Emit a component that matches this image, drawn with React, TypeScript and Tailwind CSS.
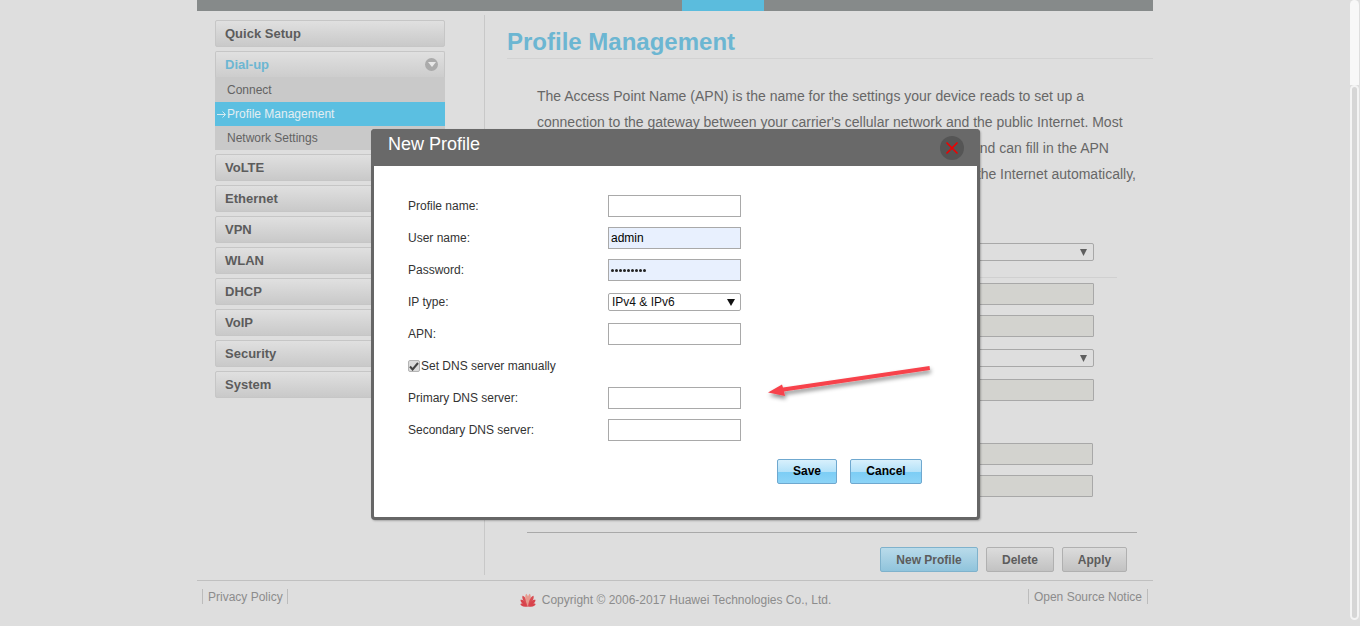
import React from "react";

const closedTop = ["Quick Setup"];
const closedBottom = ["VoLTE", "Ethernet", "VPN", "WLAN", "DHCP", "VoIP", "Security", "System"];

function NavItem({ label }: { label: string }) {
  return (
    <div className="h-[27px] flex items-center pl-[9px] text-[13px] font-bold text-[#5c5c5c] border border-[#c6c6c6] rounded-[2px] bg-gradient-to-b from-[#e0e0e0] to-[#c9c9c9]">
      {label}
    </div>
  );
}

function DimInput({ className = "" }: { className?: string }) {
  return <div className={"h-[22px] w-[300px] border border-[#a8a8a8] bg-[#d3d3cf] rounded-[1px] " + className} />;
}

function DimSelect({ className = "" }: { className?: string }) {
  return (
    <div className={"h-[18px] w-[300px] border border-[#a8a8a8] bg-[#dedede] rounded-[2px] flex items-center justify-end pr-[6px] " + className}>
      <svg width="7" height="7" viewBox="0 0 7 7"><path d="M0 0h7L3.500 7z" fill="#5f5f5f" /></svg>
    </div>
  );
}

function FieldRow({ label, children }: { label: string; children: React.ReactNode }) {
  return (
    <div className="h-8 flex items-center">
      <div className="w-[200px] text-[12px] text-[#333]">{label}</div>
      {children}
    </div>
  );
}

function TextBox({ value, filled }: { value?: string; filled?: boolean }) {
  return (
    <div className={"h-[22px] w-[133px] border border-[#a9a9a9] flex items-center pl-[2px] text-[12px] text-black " + (filled ? "bg-[#e8f0fe]" : "bg-white")}>
      {value}
    </div>
  );
}

function HuaweiLogo() {
  const petals = [
    { a: -72, l: 8, c: "#d8434c" },
    { a: -48, l: 10, c: "#d8434c" },
    { a: -27, l: 12, c: "#d94c52" },
    { a: -8, l: 13, c: "#e79a8f" },
    { a: 8, l: 13, c: "#e79a8f" },
    { a: 27, l: 12, c: "#d94c52" },
    { a: 48, l: 10, c: "#d8434c" },
    { a: 72, l: 8, c: "#d8434c" },
  ];
  return (
    <svg width="18" height="15" viewBox="0 0 18 15">
      {petals.map((p, i) => (
        <path
          key={i}
          d={`M9 14.500C6.400 ${14.5 - p.l * 0.6} 7.600 ${14.5 - p.l * 0.9} 9 ${14.5 - p.l}C10.400 ${14.5 - p.l * 0.9} 11.600 ${14.5 - p.l * 0.6} 9 14.500Z`}
          fill={p.c}
          transform={`rotate(${p.a} 9 14.500)`}
        />
      ))}
    </svg>
  );
}

export default function App() {
  return (
    <div className="relative h-[626px] overflow-hidden flex bg-[#dedede] font-['Liberation_Sans',Arial,sans-serif]">
      <div className="flex-1 min-w-0">
        <div className="mx-auto w-[956px]">
          {/* top bar */}
          <div className="h-[11px] flex">
            <div className="w-[485px] bg-[#868a8a]" />
            <div className="w-[82px] bg-[#5bbcdd]" />
            <div className="flex-1 bg-[#868a8a]" />
          </div>

          {/* body */}
          <div className="mt-[4px] h-[560px] flex">
            <aside className="w-[288px] shrink-0 border-r border-[#c8c8c8] pl-[18px] pr-[39px] pt-[5px]">
              <div className="flex flex-col gap-[4px]">
                {closedTop.map((l) => <NavItem key={l} label={l} />)}
                <div>
                  <div className="h-[26px] flex items-center justify-between pl-[9px] pr-[6px] text-[13px] font-bold text-[#6cb6d2] border border-[#c6c6c6] border-b-0 rounded-t-[2px] bg-gradient-to-b from-[#e0e0e0] to-[#cdcdcd]">
                    Dial-up
                    <span className="w-[13px] h-[13px] rounded-full bg-[#ababab] flex items-center justify-center">
                      <svg width="8" height="5" viewBox="0 0 8 5"><path d="M0 0h8L4 5z" fill="#e8e8e8" /></svg>
                    </span>
                  </div>
                  <div className="h-[25px] flex items-center pl-[12px] text-[12px] text-[#636363] bg-[#c9c9c9]">Connect</div>
                  <div className="h-[24px] flex items-center pl-[2px] text-[12px] text-[#e4eef2] bg-[#5bbfe1]">
                    <svg className="w-[10px] shrink-0" width="10" height="7" viewBox="0 0 10 7">
                      <path d="M0 3.500h8M5.500 0.500l3 3-3 3" fill="none" stroke="#e4eef2" strokeWidth="0.900" />
                    </svg>
                    Profile Management
                  </div>
                  <div className="h-[24px] flex items-center pl-[12px] text-[12px] text-[#636363] bg-[#c9c9c9]">Network Settings</div>
                </div>
                {closedBottom.map((l) => <NavItem key={l} label={l} />)}
              </div>
            </aside>

            <main className="flex-1 min-w-0">
              <div className="ml-[22px] h-[44px] pt-[12px] border-b border-[#d2d2d2]">
                <h1 className="text-[24px] leading-[30px] font-bold text-[#6cb6d2]">Profile Management</h1>
              </div>

              <div className="ml-[52px] mt-[24px] text-[14px] leading-[26px] text-[#676767] whitespace-nowrap">
                <p>The Access Point Name (APN) is the name for the settings your device reads to set up a</p>
                <p>connection to the gateway between your carrier's cellular network and the public Internet. Most</p>
                <p>devices are able to recognize the correct APN settings for your carrier and can fill in the APN</p>
                <p>information for you. Your device should then also be able to connect to the Internet automatically,</p>
              </div>

              <div className="mt-[56px] flex flex-col items-end pr-[59px]">
                <DimSelect />
                <div className="mt-[16px] -mr-[23px] w-[324px] h-px bg-[#d0d0d0]" />
                <DimInput className="mt-[5px]" />
                <DimInput className="mt-[10px]" />
                <DimSelect className="mt-[12px]" />
                <DimInput className="mt-[12px]" />
                <DimInput className="mt-[42px] mr-px" />
                <DimInput className="mt-[10px] mr-px" />
              </div>

              <div className="ml-[42px] mr-[16px] mt-[35px] h-px bg-[#a9a9a9]" />

              <div className="mt-[14px] mr-[26px] flex justify-end gap-[8px] text-[12px] font-bold text-[#5c5c5c]">
                <div className="h-[25px] w-[98px] flex items-center justify-center rounded-[2px] border border-[#7fb2cc] bg-gradient-to-b from-[#b9dbea] to-[#90c4dc]">New Profile</div>
                <div className="h-[25px] w-[68px] flex items-center justify-center rounded-[2px] border border-[#b0b0b0] bg-gradient-to-b from-[#dcdcdc] to-[#c2c2c2]">Delete</div>
                <div className="h-[25px] w-[65px] flex items-center justify-center rounded-[2px] border border-[#b0b0b0] bg-gradient-to-b from-[#dcdcdc] to-[#c2c2c2]">Apply</div>
              </div>
            </main>
          </div>

          {/* footer */}
          <footer className="mt-[5px] border-t border-[#c0c0c0] px-[5px] grid grid-cols-[1fr_auto_1fr] text-[12px] text-[#8c8c8c]">
            <div className="mt-[8px] flex">
              <span className="flex items-center h-[15px] pl-[5px] pr-[4px] border-x border-[#bcbcbc]">Privacy Policy</span>
            </div>
            <div className="mt-[10px] flex items-center gap-[5px] h-[17px]">
              <HuaweiLogo />
              <span>Copyright © 2006-2017 Huawei Technologies Co., Ltd.</span>
            </div>
            <div className="mt-[8px] flex justify-end">
              <span className="flex items-center h-[15px] px-[5px] border-x border-[#bcbcbc]">Open Source Notice</span>
            </div>
          </footer>
        </div>
      </div>

      {/* page scrollbar */}
      <div className="w-[10px] shrink-0 flex flex-col h-[620px] pr-px">
        <div className="h-[85px] bg-[#f8f8f8] rounded-t-full" />
        <div className="flex-1 bg-[#d6d6d6] border-2 border-[#f4f4f4] rounded-full" />
      </div>

      {/* modal dialog */}
      <div className="absolute left-[371px] top-[129px] w-[609px] h-[391px] bg-white rounded-[4px] border-x-[3px] border-b-[3px] border-[#666666] shadow-[1px_1px_2px_rgba(0,0,0,0.25)]">
        <div className="-mx-[3px] h-[37px] rounded-t-[4px] bg-[#696969] flex items-center justify-between pl-[17px] pr-[16px]">
          <span className="text-[18px] text-white pb-[7px] leading-[30px]">New Profile</span>
          <button className="w-6 h-6 rounded-full bg-[#555555] flex items-center justify-center">
            <svg width="14" height="14" viewBox="0 0 14 14"><path d="M1.500 1.500l11 11M12.500 1.500l-11 11" stroke="#f00000" strokeWidth="1.600" /></svg>
          </button>
        </div>
        <div className="pl-[34px] pt-[24px]">
          <FieldRow label="Profile name:"><TextBox /></FieldRow>
          <FieldRow label="User name:"><TextBox value="admin" filled /></FieldRow>
          <FieldRow label="Password:">
            <div className="h-[22px] w-[133px] border border-[#a9a9a9] bg-[#e8f0fe] flex items-center pl-[2px] gap-[1px]">
              {Array.from({ length: 9 }).map((_, i) => (
                <span key={i} className="w-[3px] h-[3px] rounded-full bg-[#222]" />
              ))}
            </div>
          </FieldRow>
          <FieldRow label="IP type:">
            <div className="h-[18px] w-[133px] border border-[#a9a9a9] rounded-[2px] bg-white flex items-center justify-between pl-[3px] pr-[5px] text-[12px] text-[#111]">
              IPv4 &amp; IPv6
              <svg width="8" height="7" viewBox="0 0 8 7"><path d="M0 0h8L4 7z" fill="#111" /></svg>
            </div>
          </FieldRow>
          <FieldRow label="APN:"><TextBox /></FieldRow>
          <div className="h-8 flex items-center text-[12px] text-[#333]">
            <span className="w-[12px] h-[12px] mr-px rounded-[2px] border border-[#b4b4b4] bg-[#dcdcdc] flex items-center justify-center">
              <svg width="10" height="9" viewBox="0 0 10 9"><path d="M1 4.500l2.600 3L9 1" fill="none" stroke="#444" strokeWidth="2" /></svg>
            </span>
            Set DNS server manually
          </div>
          <FieldRow label="Primary DNS server:"><TextBox /></FieldRow>
          <FieldRow label="Secondary DNS server:"><TextBox /></FieldRow>
          <div className="mt-[13px] ml-[369px] flex gap-[13px] text-[12px] font-bold text-black">
            <div className="h-[25px] w-[60px] flex items-center justify-center pb-[2px] rounded-[2px] border border-[#6fa8cf] bg-[linear-gradient(#d8f0fc,#b4e2f9_50%,#7ccdf5_52%,#8cd4f7)]">Save</div>
            <div className="h-[25px] w-[72px] flex items-center justify-center pb-[2px] rounded-[2px] border border-[#6fa8cf] bg-[linear-gradient(#d8f0fc,#b4e2f9_50%,#7ccdf5_52%,#8cd4f7)]">Cancel</div>
          </div>
        </div>
      </div>

      {/* annotation arrow */}
      <svg className="absolute left-[760px] top-[358px]" width="180" height="50" viewBox="0 0 180 50">
        <defs>
          <filter id="arrowShadow" x="-10%" y="-50%" width="120%" height="220%">
            <feDropShadow dx="1" dy="3" stdDeviation="2" floodColor="#000" floodOpacity="0.45" />
          </filter>
        </defs>
        <path d="M169.500 8L170 12L24 33.500L25 38L8 34.500L22 26.500L23 29.500Z" fill="#f7434b" filter="url(#arrowShadow)" />
      </svg>
    </div>
  );
}
